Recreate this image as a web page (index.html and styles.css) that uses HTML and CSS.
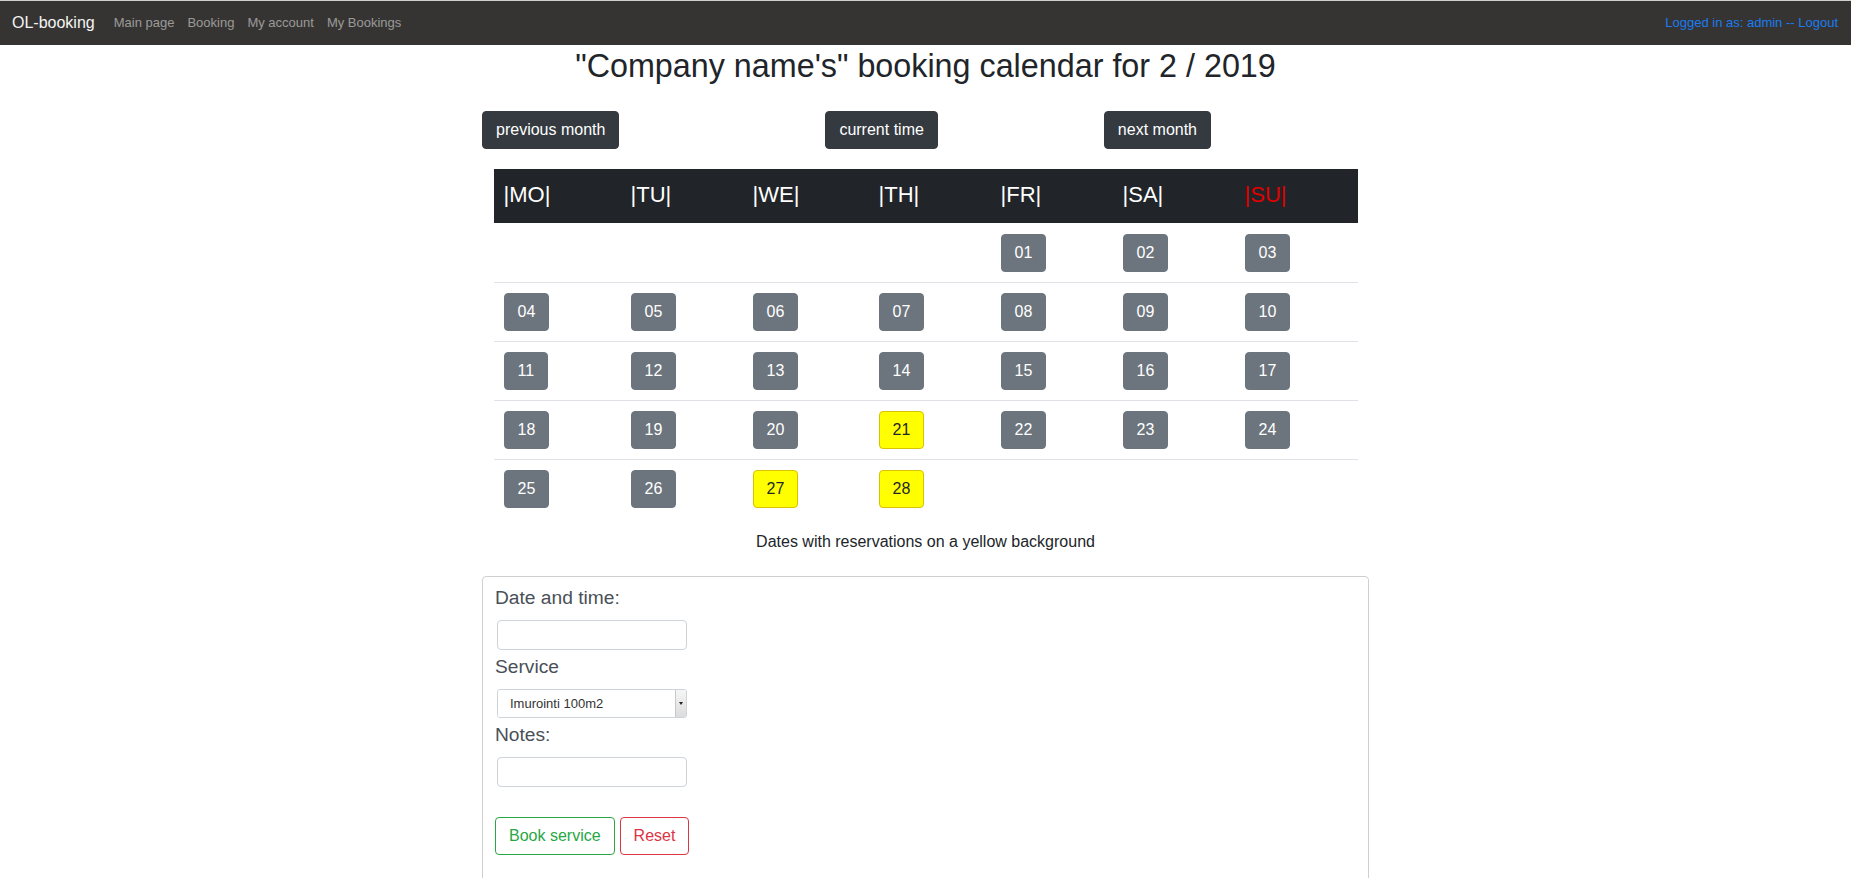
FILE: index.html
```html
<!DOCTYPE html>
<html lang="en">
<head>
<meta charset="utf-8">
<title>OL-booking</title>
<link rel="stylesheet" href="styles.css">
</head>
<body>
<nav class="navbar">
  <a class="brand" href="#">OL-booking</a>
  <div class="nav-links">
    <a href="#">Main page</a>
    <a href="#">Booking</a>
    <a href="#">My account</a>
    <a href="#">My Bookings</a>
  </div>
  <a class="user" href="#">Logged in as: admin -- Logout</a>
</nav>
<main class="container">
  <h1 class="title">"Company name's" booking calendar for 2 / 2019</h1>
  <div class="month-nav">
    <button class="btn btn-dark">previous month</button>
    <button class="btn btn-dark btn-current">current time</button>
    <button class="btn btn-dark btn-next">next month</button>
  </div>
  <table class="calendar">
    <colgroup>
      <col class="c1"><col class="c2"><col class="c3"><col class="c4"><col class="c5"><col class="c6"><col class="c7">
    </colgroup>
    <thead>
      <tr><th>|MO|</th><th>|TU|</th><th>|WE|</th><th>|TH|</th><th>|FR|</th><th>|SA|</th><th class="sun">|SU|</th></tr>
    </thead>
    <tbody>
      <tr><td></td><td></td><td></td><td></td><td><button class="day">01</button></td><td><button class="day">02</button></td><td><button class="day">03</button></td></tr>
      <tr><td><button class="day">04</button></td><td><button class="day">05</button></td><td><button class="day">06</button></td><td><button class="day">07</button></td><td><button class="day">08</button></td><td><button class="day">09</button></td><td><button class="day">10</button></td></tr>
      <tr><td><button class="day">11</button></td><td><button class="day">12</button></td><td><button class="day">13</button></td><td><button class="day">14</button></td><td><button class="day">15</button></td><td><button class="day">16</button></td><td><button class="day">17</button></td></tr>
      <tr><td><button class="day">18</button></td><td><button class="day">19</button></td><td><button class="day">20</button></td><td><button class="day reserved">21</button></td><td><button class="day">22</button></td><td><button class="day">23</button></td><td><button class="day">24</button></td></tr>
      <tr><td><button class="day">25</button></td><td><button class="day">26</button></td><td><button class="day reserved">27</button></td><td><button class="day reserved">28</button></td><td></td><td></td><td></td></tr>
    </tbody>
  </table>
  <p class="legend">Dates with reservations on a yellow background</p>
  <form class="card">
    <label class="lbl">Date and time:</label>
    <input class="field" type="text">
    <label class="lbl">Service</label>
    <div class="select-wrap">
      <select class="select"><option>Imurointi 100m2</option></select>
      <span class="select-arrow"></span>
    </div>
    <label class="lbl">Notes:</label>
    <input class="field" type="text">
    <div class="actions">
      <button type="button" class="btn btn-outline-success">Book service</button>
      <button type="reset" class="btn btn-outline-danger">Reset</button>
    </div>
  </form>
</main>
</body>
</html>
```
FILE: styles.css
```css
* { box-sizing: border-box; }
html, body { margin: 0; padding: 0; }
body {
  font-family: "Liberation Sans", Arial, sans-serif;
  font-size: 16px;
  line-height: 1.5;
  color: #212529;
  background: #fff;
  overflow: hidden;
}
a { text-decoration: none; }

.navbar {
  display: flex;
  align-items: center;
  height: 45px;
  border-top: 1px solid #cfcfcf;
  background: #353432;
  padding: 0 13px 0 12px;
}
.brand {
  color: #f4f4f4;
  font-size: 16px;
  margin-right: 19px;
}
.nav-links { display: flex; gap: 13px; flex: 1; }
.nav-links a { color: rgba(255,255,255,.5); font-size: 13px; }
.user { color: #1a7cf0; font-size: 13px; }

.container { width: 887px; margin: 0 auto; }
.title {
  margin: 2px 0 0;
  font-size: 32.3px;
  line-height: 38px;
  font-weight: 400;
  text-align: center;
  color: #212529;
}
.month-nav { display: flex; margin-top: 26px; }
.btn {
  font-family: inherit;
  font-size: 16px;
  line-height: 24px;
  padding: 6px 13px;
  border: 1px solid transparent;
  border-radius: 4px;
  cursor: pointer;
}
.btn-dark { background: #343a40; border-color: #343a40; color: #fff; }
.btn-current { margin-left: 206px; }
.btn-next { margin-left: 166px; }

.calendar {
  width: 864px;
  margin: 20px auto 0;
  border-collapse: collapse;
  table-layout: fixed;
}
.c1 { width: 127px; } .c2 { width: 122px; } .c3 { width: 126px; } .c4 { width: 122px; }
.c5 { width: 122px; } .c6 { width: 122px; } .c7 { width: 123px; }
.calendar th {
  background: #212529;
  color: #fff;
  font-weight: 400;
  font-size: 22px;
  line-height: 34px;
  padding: 9px 10px 11px;
  text-align: left;
}
.calendar th.sun { color: #e00000; }
.calendar td {
  border-top: 1px solid #dee2e6;
  padding: 10px;
  height: 59px;
  vertical-align: middle;
}
.calendar tbody tr:first-child td { border-top-color: #fff; }
.day {
  font-family: inherit;
  font-size: 16px;
  line-height: 24px;
  height: 38px;
  padding: 6px 13px;
  border: 1px solid #6c757d;
  border-radius: 4px;
  background: #6c757d;
  color: #fff;
  display: block;
}
.day.reserved { background: #ffff00; border-color: #d9c200; color: #212529; }

.legend { margin: 11px 0 0; text-align: center; line-height: 24px; }

.card {
  margin-top: 22px;
  border: 1px solid #cfcfcf;
  border-radius: 4px;
  padding: 8px 12px 40px;
  display: flex;
  flex-direction: column;
  align-items: flex-start;
  min-height: 320px;
}
.lbl {
  font-size: 19.2px;
  line-height: 26px;
  color: #495057;
  margin-bottom: 9px;
}
.field {
  width: 190px;
  height: 30px;
  margin: 0 0 4px 2px;
  border: 1px solid #ced4da;
  border-radius: 4px;
  font-family: inherit;
  font-size: 13px;
}
.select-wrap {
  display: flex;
  width: 190px;
  height: 29px;
  margin: 0 0 4px 2px;
  border: 1px solid #ced4da;
  border-radius: 3px;
  overflow: hidden;
}
.select {
  appearance: none;
  -webkit-appearance: none;
  flex: 1;
  border: none;
  background: #fff;
  font-family: inherit;
  font-size: 13px;
  color: #333;
  padding: 0 0 0 12px;
  outline: none;
}
.select-arrow {
  width: 11px;
  border-left: 1px solid #c8c8c8;
  background: linear-gradient(#f6f6f6, #dcdcdc);
  display: flex;
  align-items: center;
  justify-content: center;
}
.select-arrow::after {
  content: "";
  border-left: 2.5px solid transparent;
  border-right: 2.5px solid transparent;
  border-top: 3px solid #222;
}
.actions { display: flex; gap: 5px; margin-top: 26px; }
.btn-outline-success { background: #fff; border-color: #28a745; color: #28a745; }
.btn-outline-danger { background: #fff; border-color: #dc3545; color: #dc3545; }
```
